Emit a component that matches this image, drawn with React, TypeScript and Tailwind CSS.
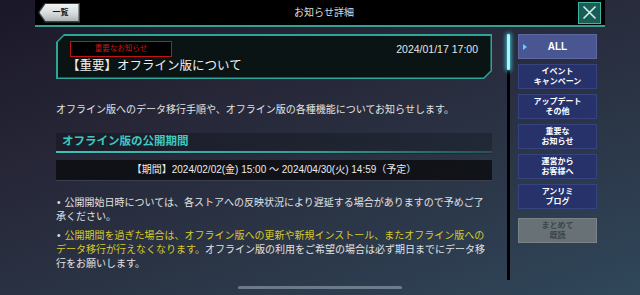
import React from "react";

const jp = { fontFamily: '"Liberation Sans", "Noto Sans CJK JP", sans-serif' };

function SideButton({ lines, active, gray }: { lines: string[]; active?: boolean; gray?: boolean }) {
  const base = "w-[79px] h-[25px] flex flex-col items-center justify-center relative border";
  const cls = gray
    ? "bg-[#687276] border-[#7a8488] text-[#3b4649]"
    : active
    ? "bg-[#4a5692] border-[#5c68a4] text-white"
    : "bg-[#27316a] border-[#36437e] text-white";
  return (
    <div className={`${base} ${cls}`}>
      {active && (
        <span className="absolute left-[4px] top-[9px] w-0 h-0 border-y-[3px] border-y-transparent border-l-[4px] border-l-[#5fd0ff]" />
      )}
      {lines.map((l, i) => (
        <span key={i} className={active ? "text-[10px] leading-[12px] font-bold" : "text-[8px] leading-[10px] font-bold"}>
          {l}
        </span>
      ))}
    </div>
  );
}

export default function App() {
  return (
    <div
      style={jp}
      className="w-[640px] h-[295px] overflow-hidden relative bg-[linear-gradient(160deg,#1a1828_0%,#262536_30%,#2a3344_60%,#30475a_100%)]"
    >
      {/* header */}
      <div className="ml-[35px] w-[570px] h-[27px] bg-black border-b-2 border-[#33a093] flex items-center relative">
        <div className="ml-[3px] w-[42px] h-[20px] bg-[#35444a] [clip-path:polygon(7px_0,100%_0,100%_100%,7px_100%,0_50%)] p-[1.5px]">
          <div className="w-full h-full bg-[linear-gradient(180deg,#f2f4f4_0%,#d6dada_55%,#aeb4b4_100%)] [clip-path:polygon(6px_0,100%_0,100%_100%,6px_100%,0_50%)] flex items-center justify-center pl-[3px]">
            <span className="text-[8px] font-bold text-[#1a1a1a] leading-none">一覧</span>
          </div>
        </div>
        <div className="flex-1 text-center text-[10px] text-[#dcdcdc] pr-[10px]">お知らせ詳細</div>
        <div className="mr-[4px] w-[23px] h-[22px] bg-[#1c5c56] border border-[#3fb3a4] flex items-center justify-center">
          <svg width="15" height="15" viewBox="0 0 15 15">
            <path d="M1.5 1.5 L13.5 13.5 M13.5 1.5 L1.5 13.5" stroke="#c8f4ec" strokeWidth="1.6" />
          </svg>
        </div>
      </div>

      {/* body */}
      <div className="flex mt-[7px]">
        <div className="ml-[56px] w-[436px]">
          {/* title card */}
          <div className="h-[45px] bg-[#2fa597] p-[1.5px] [clip-path:polygon(8px_0,100%_0,100%_calc(100%_-_8px),calc(100%_-_8px)_100%,0_100%,0_8px)]">
            <div className="h-full bg-[#0b1414] [clip-path:polygon(7px_0,100%_0,100%_calc(100%_-_7px),calc(100%_-_7px)_100%,0_100%,0_7px)] pt-[5.5px] pl-[12.5px] pr-[12.5px]">
              <div className="flex items-center justify-between">
                <div className="w-[102px] h-[16px] border border-[#c01414] bg-black flex items-center justify-center">
                  <span className="text-[7.5px] text-[#d01818] leading-none">重要なお知らせ</span>
                </div>
                <span className="text-[10.5px] text-[#e6e6e6] leading-none">2024/01/17 17:00</span>
              </div>
              <div className="mt-[1px] text-[12.5px] leading-[16px] text-[#f0f0f0] -ml-[3px]">【重要】オフライン版について</div>
            </div>
          </div>

          <p className="mt-[24px] text-[10px] leading-[14px] text-[#e2e2e2]">
            オフライン版へのデータ移行手順や、オフライン版の各種機能についてお知らせします。
          </p>

          {/* section header */}
          <div className="mt-[16px] h-[21px] bg-[linear-gradient(90deg,rgba(20,24,32,0.6),rgba(20,24,32,0.4))] flex flex-col justify-end">
            <div className="flex-1 flex items-center pl-[6px]">
              <span className="text-[11.5px] font-bold text-[#40c9c0] leading-none">オフライン版の公開期間</span>
            </div>
            <div className="h-[2px] mb-[1px] bg-[linear-gradient(90deg,#3cc4b8_0%,#2f9e95_60%,rgba(47,158,149,0.35)_100%)]" />
          </div>

          {/* period */}
          <div className="mt-[6px] h-[21px] bg-[rgba(12,13,16,0.85)] border-b border-[#3a4050] flex items-center justify-center">
            <span className="text-[10px] text-[#ececec] leading-none">【期間】2024/02/02(金) 15:00 〜 2024/04/30(火) 14:59（予定）</span>
          </div>

          {/* bullets */}
          <p className="mt-[15px] w-[430px] text-[10px] leading-[14px] text-[#e2e2e2]">
            <span className="pl-[1px] pr-[4px]">•</span>
            公開開始日時については、各ストアへの反映状況により遅延する場合がありますので予めご了承ください。
          </p>
          <p className="mt-[5px] w-[430px] text-[10px] leading-[14px] text-[#e2e2e2]">
            <span className="pl-[1px] pr-[4px]">•</span>
            <span className="text-[#d8ca2c]">公開期間を過ぎた場合は、オフライン版への更新や新規インストール、またオフライン版へのデータ移行が行えなくなります。</span>
            オフライン版の利用をご希望の場合は必ず期日までにデータ移行をお願いします。
          </p>
        </div>

        {/* scroll track */}
        <div className="ml-[15px] w-[3px] h-[246px] flex flex-col bg-black">
          <div className="h-[36px] bg-[#a8f6f6] shadow-[0_0_4px_1px_#3fc4d4] rounded-[1px]" />
        </div>

        {/* sidebar */}
        <div className="ml-[8px] flex flex-col gap-[5px]">
          <SideButton lines={["ALL"]} active />
          <SideButton lines={["イベント", "キャンペーン"]} />
          <SideButton lines={["アップデート", "その他"]} />
          <SideButton lines={["重要な", "お知らせ"]} />
          <SideButton lines={["運営から", "お客様へ"]} />
          <SideButton lines={["アンリミ", "ブログ"]} />
          <div className="mt-[4px]">
            <SideButton lines={["まとめて", "既読"]} gray />
          </div>
        </div>
      </div>

      {/* home indicator */}
      <div className="absolute left-[238px] top-[286px] w-[164px] h-[3px] rounded-full bg-[rgba(190,200,210,0.45)]" />
    </div>
  );
}
